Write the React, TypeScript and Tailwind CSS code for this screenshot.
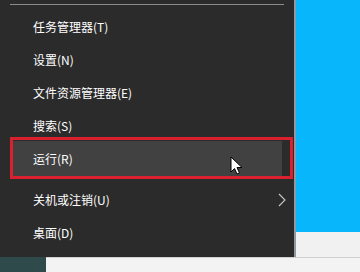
const font = { fontFamily: '"Noto Sans CJK SC", "Noto Sans", sans-serif' };

function Item({ label, chevron }: { label: string; chevron?: boolean }) {
  return (
    <div className="h-[33px] flex items-center pl-[33px] pr-[8px] text-[12px] text-white">
      <span className="flex-1">{label}</span>
      {chevron && (
        <svg width="8" height="14" viewBox="0 0 8 14" className="mr-[0px]">
          <path d="M1 1 L7 7 L1 13" stroke="#c8c8c8" strokeWidth="1.1" fill="none" />
        </svg>
      )}
    </div>
  );
}

export default function App() {
  return (
    <div className="w-[360px] h-[272px] overflow-hidden bg-[#f1f1f1] flex flex-col" style={font}>
      <div className="flex h-[257px]">
        <div className="relative w-[296px] bg-[#2b2b2b] border-r-[2px] border-[#8f9aa0] flex flex-col">
          <div className="h-[10px] pt-[4px] pl-[10px] pr-[10px]">
            <div className="h-px bg-[#8c8c8c]" />
          </div>
          <Item label="任务管理器(T)" />
          <Item label="设置(N)" />
          <Item label="文件资源管理器(E)" />
          <Item label="搜索(S)" />
          <div className="mx-[12px] my-[-1px] bg-[#414141]">
            <div className="h-[35px] flex items-center pl-[21px] text-[12px] text-white">运行(R)</div>
          </div>
          <div className="h-[8px]" />
          <Item label="关机或注销(U)" chevron />
          <Item label="桌面(D)" />

          <div className="absolute left-[10px] top-[137px] w-[283px] h-[42px] border-[3px] border-[#d8202e]" />
          <svg className="absolute left-[230px] top-[156px]" width="14" height="20" viewBox="0 0 14 20">
            <path d="M1 1 L1 16 L4.5 12.5 L7 18 L9.5 17 L7 11.5 L12 11.5 Z" fill="#ffffff" stroke="#000000" strokeWidth="1" strokeLinejoin="round" />
          </svg>
        </div>
        <div className="flex-1 flex flex-col">
          <div className="h-[232px] bg-[#08b6fb]" />
          <div className="flex-1 bg-[#f1f1f1]" />
        </div>
      </div>
      <div className="flex-1 flex">
        <div className="w-[46px] bg-[#2e4a4a]" />
        <div className="flex-1 bg-[#f3f3f3] border-t border-[#d0d0d0]" />
      </div>
    </div>
  );
}
